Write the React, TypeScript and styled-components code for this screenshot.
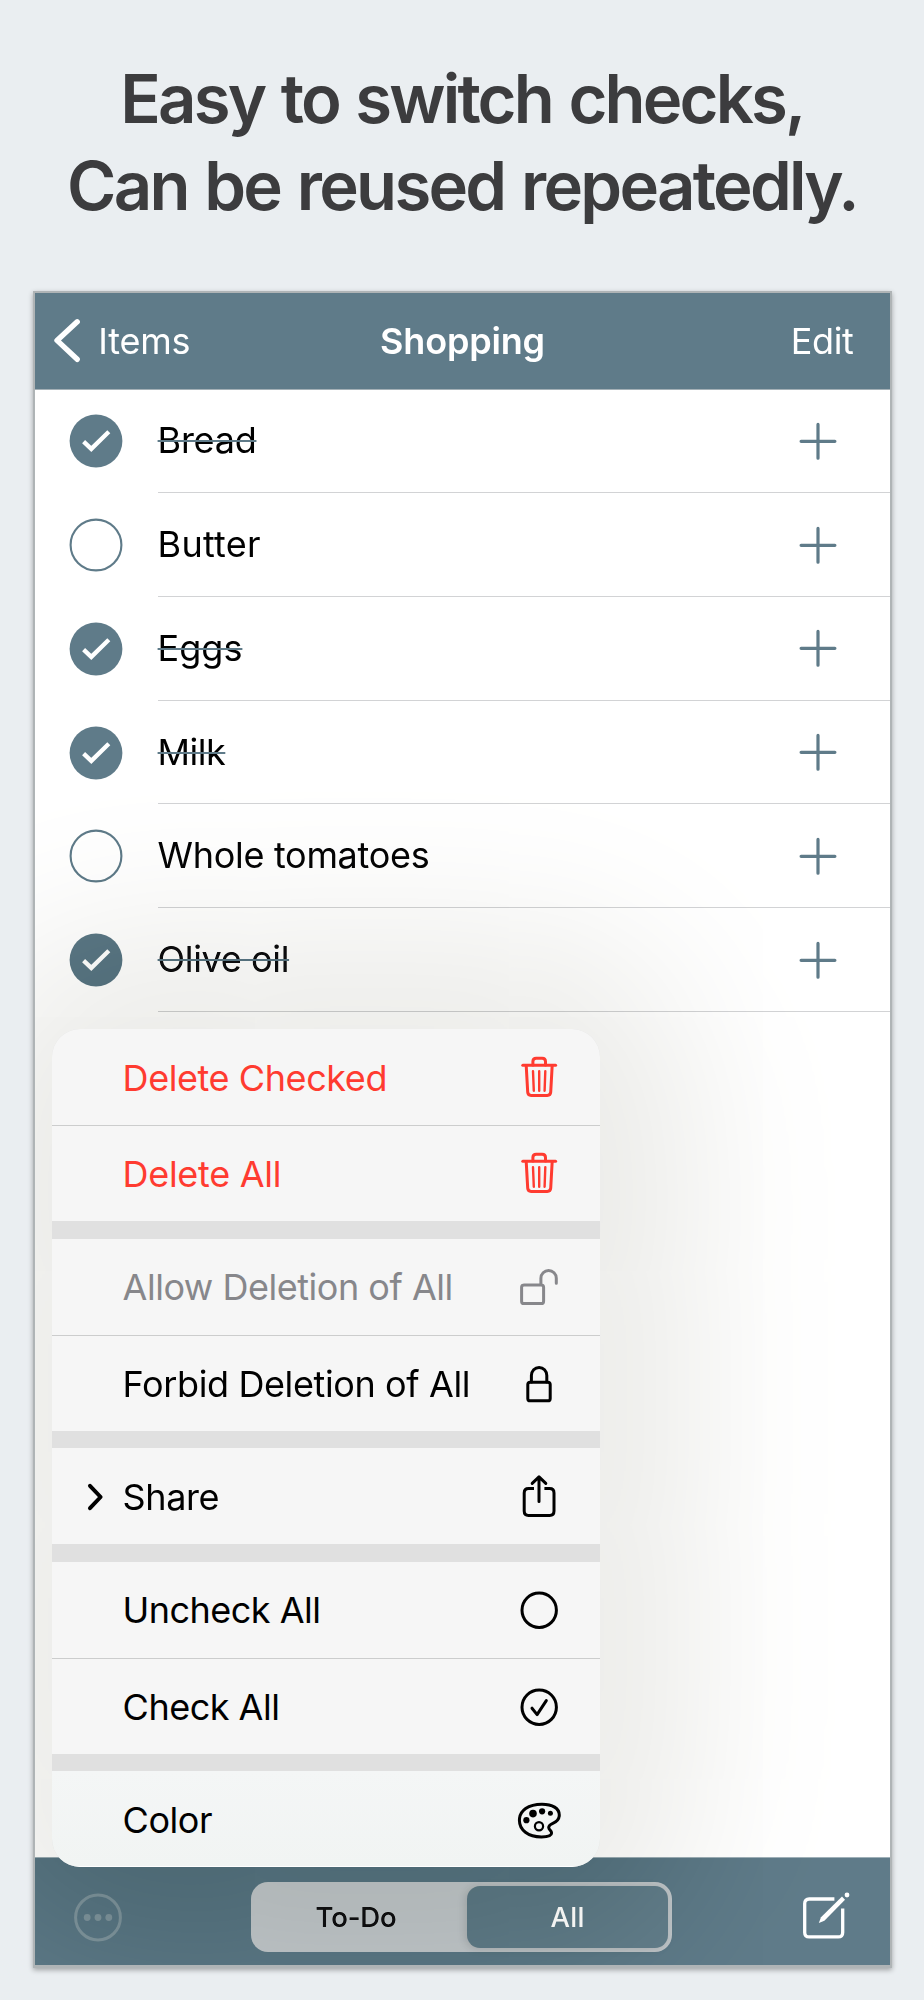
import React from 'react';
import styled, { createGlobalStyle, css } from 'styled-components';

const slate = '#5f7b89';

const GlobalStyle = createGlobalStyle`
  *, *::before, *::after { box-sizing: border-box; }
  body {
    margin: 0;
    background: #eaeef1;
    font-family: Inter, "Liberation Sans", sans-serif;
    color: #000;
  }
`;

const Page = styled.main`
  width: 924px;
  height: 2000px;
  overflow: hidden;
  padding-top: 56px;
  background: #eaeef1;
`;

const Headline = styled.h1`
  margin: 0 0 62px;
  height: 173px;
  text-align: center;
  font-size: 67px;
  font-weight: 600;
  line-height: 86.5px;
  color: #3c3c3e;
  white-space: nowrap;
`;

const HeadlineLine = styled.span<{ $tracking: number }>`
  display: block;
  letter-spacing: ${p => p.$tracking}px;
  word-spacing: 2.4px;
`;

const Phone = styled.section`
  position: relative;
  display: flex;
  flex-direction: column;
  width: 859px;
  height: 1677px;
  margin-left: 33px;
  border: 2px solid #afb4b6;
  border-bottom-width: 3px;
  background: #fff;
  box-shadow: 0 2px 5px rgba(0, 0, 0, 0.32);
`;

const NavBar = styled.header`
  display: grid;
  grid-template-columns: 1fr auto 1fr;
  align-items: center;
  height: 97px;
  padding: 0 18px;
  border-bottom: 1px solid #a4b0b6;
  background: ${slate};
  color: #fff;
  font-size: 36px;
  line-height: 44px;
`;

const BackButton = styled.div`
  display: flex;
  align-items: center;
  gap: 19.3px;
`;

const NavText = styled.span<{ $tracking: number }>`
  letter-spacing: ${p => p.$tracking}px;
`;

const NavTitle = styled(NavText)`
  font-weight: 600;
`;

const EditButton = styled(NavText)`
  justify-self: end;
  margin-right: 18.6px;
`;

const List = styled.ul`
  flex: 1;
  margin: -0.6px 0 0;
  padding: 0;
  list-style: none;
`;

const Row = styled.li`
  display: flex;
  align-items: center;
  height: 103.75px;
  padding-left: 34px;
`;

const RowBody = styled.div`
  flex: 1;
  display: flex;
  align-items: center;
  justify-content: space-between;
  height: 100%;
  margin-left: 34.6px;
  padding-right: 50px;
  border-bottom: 1px solid #d2d3d5;
`;

const RowLabel = styled.span<{ $tracking: number; $struck: boolean }>`
  margin-bottom: 1px;
  font-size: 36px;
  line-height: 44px;
  letter-spacing: ${p => p.$tracking}px;
  ${p => p.$struck && css`
    text-decoration: line-through 2px ${slate};
  `}
`;

const Toolbar = styled.footer`
  display: flex;
  align-items: center;
  height: 108px;
  padding: 13px 39px 0 36.5px;
  border-top: 1px solid #9fb0b8;
  background: ${slate};

  > svg:last-child {
    margin-left: auto;
  }
`;

const Segmented = styled.div`
  display: grid;
  grid-template-columns: 1fr 201.5px;
  width: 421px;
  height: 70px;
  margin: 0 0 2px 127.8px;
  padding: 4px;
  border-radius: 17px;
  background: #c1c7cb;
`;

const Segment = styled.span<{ $active?: boolean }>`
  display: flex;
  align-items: center;
  justify-content: center;
  border-radius: 13px;
  font-size: 27.5px;
  font-weight: 500;
  ${p => p.$active ? css`
    background: #647f8c;
    color: #fff;
    letter-spacing: 0.28px;
    box-shadow: -2px 1px 8px rgba(0, 0, 0, 0.12);
  ` : css`
    letter-spacing: -0.1px;
    padding-right: 10px;
  `}
`;

const MenuShade = styled.div`
  position: absolute;
  inset: 0;
  overflow: hidden;
  mix-blend-mode: difference;
  pointer-events: none;

  &::before {
    content: "";
    position: absolute;
    top: 736px;
    left: 17px;
    width: 548px;
    height: 838px;
    border-radius: 70px;
    box-shadow: 0 0 170px 94px rgb(21, 21, 24);
  }
`;

const Menu = styled.div`
  position: absolute;
  top: 736px;
  left: 17.4px;
  width: 547.6px;
  height: 838px;
  display: flex;
  flex-direction: column;
  gap: 17.6px;
  overflow: hidden;
  border-radius: 28px;
  background: #e0e0e0;
`;

const MenuGroup = styled.div`
  display: flex;
  flex-direction: column;
  background: #f6f6f6;

  &:last-child {
    background: linear-gradient(#f4f6f6, #f1f4f3);
    box-shadow: inset 0 -1px #fff;
  }
`;

const MenuItem = styled.div<{ $tone: string }>`
  display: flex;
  align-items: center;
  height: 96px;
  padding: 1px 37.1px 0 32px;
  color: ${p => p.$tone};

  & + & {
    border-top: 1px solid #cccdcd;
  }
`;

const MenuLead = styled.span`
  display: flex;
  width: 38.2px;
`;

const MenuLabel = styled.span<{ $tracking: number }>`
  flex: 1;
  font-size: 36px;
  line-height: 44px;
  white-space: nowrap;
  letter-spacing: ${p => p.$tracking}px;
`;

const Glyph = styled.svg`
  display: block;
  flex: none;
  overflow: visible;
  fill: none;
  stroke: currentColor;
  stroke-width: 3;
  stroke-linecap: round;
  stroke-linejoin: round;
`;

const RowGlyph = styled(Glyph)`
  color: ${slate};
`;

const BarGlyph = styled(Glyph)`
  color: #fff;
`;

const DimGlyph = styled(Glyph)`
  color: #8297a0;
`;

const CheckMark = ({ on }: { on: boolean }) => (
  <RowGlyph width="54" height="54" viewBox="0 0 54 54">
    {on ? (
      <>
        <circle cx="27" cy="27" r="26.4" fill={slate} stroke="none" />
        <path d="M14.6 27.6 22.3 34.9 39.8 17.8" stroke="#fff" strokeWidth="4.3" strokeLinecap="butt" strokeLinejoin="miter" />
      </>
    ) : (
      <circle cx="27" cy="27" r="25.4" strokeWidth="2.1" fill="#fff" />
    )}
  </RowGlyph>
);

const Plus = () => (
  <RowGlyph width="44" height="44" viewBox="0 0 44 44">
    <path d="M22 5.4V39.2M5.1 22.3H38.9" strokeWidth="3.2" />
  </RowGlyph>
);

const icons: Record<string, React.ReactNode> = {
  trash: (
    <>
      <path d="M7.8 11.2H40.6" />
      <path d="M17.9 11V7.6Q17.9 4.3 21.2 4.3H27.2Q30.5 4.3 30.5 7.6V11" />
      <path d="M11.2 11.4 12.7 38.2Q12.9 41.4 16.1 41.4H32.3Q35.5 41.4 35.7 38.2L37.2 11.4" />
      <path d="M18 17.3 18.8 36.8M24.2 17.3V36.8M30.3 17.3 29.6 36.8" strokeWidth="2.4" />
    </>
  ),
  unlocked: (
    <>
      <rect x="6.6" y="21.9" width="22" height="18.7" rx="2.4" />
      <path d="M25.9 21.5V15.2A7.7 7.7 0 0 1 41.3 15.2V20.2" />
    </>
  ),
  locked: (
    <>
      <rect x="12.8" y="22.2" width="22.4" height="18.6" rx="2.4" />
      <path d="M16.4 22V15.6A7.7 8.2 0 0 1 31.8 15.6V22" />
    </>
  ),
  share: (
    <>
      <path d="M19 15.6H13.6Q9.2 15.6 9.2 20V38Q9.2 42.4 13.6 42.4H34.6Q39 42.4 39 38V20Q39 15.6 34.6 15.6H29.4" strokeLinecap="butt" />
      <path d="M24 4.4V28.6M17.2 10.4 24 3.8 30.8 10.4" />
    </>
  ),
  circle: <circle cx="24.2" cy="24.2" r="17.2" />,
  check: (
    <>
      <circle cx="24.2" cy="24.2" r="17.2" />
      <path d="M17 25.2 22.1 31.6 31.3 17.6" />
    </>
  ),
  palette: (
    <>
      <path d="M27 8.2C37.5 8.2 44.3 12.4 44.3 19C44.3 23.3 41.6 25.8 37.8 27.4C35 28.6 33.7 29.6 33.7 31.5C33.7 34 36.6 34.3 36.6 37C36.6 39.9 32.5 40.9 26.5 40.9C13 40.9 4.4 34 4.4 24.3C4.4 14.5 13.5 8.2 27 8.2Z" />
      <g fill="currentColor" stroke="none">
        <circle cx="11.4" cy="24.2" r="3.1" />
        <circle cx="18" cy="17.6" r="3.8" />
        <circle cx="27.1" cy="15.3" r="3.1" />
        <circle cx="35.4" cy="17.2" r="2.5" />
      </g>
      <circle cx="24" cy="30.2" r="4.1" strokeWidth="2.2" />
    </>
  ),
};

const MenuIcon = ({ name }: { name: string }) => (
  <Glyph width="48" height="48" viewBox="0 0 48 48">{icons[name]}</Glyph>
);

interface Item { label: string; done: boolean; tracking: number }

const items: Item[] = [
  { label: 'Bread', done: true, tracking: -0.25 },
  { label: 'Butter', done: false, tracking: 0.25 },
  { label: 'Eggs', done: true, tracking: 0 },
  { label: 'Milk', done: true, tracking: -0.5 },
  { label: 'Whole tomatoes', done: false, tracking: -0.3 },
  { label: 'Olive oil', done: true, tracking: -0.35 },
];

interface Action { label: string; icon: string; tracking: number; tone?: string; submenu?: boolean }

const groups: Action[][] = [
  [
    { label: 'Delete Checked', icon: 'trash', tone: '#ff3b30', tracking: -0.42 },
    { label: 'Delete All', icon: 'trash', tone: '#ff3b30', tracking: -0.3 },
  ],
  [
    { label: 'Allow Deletion of All', icon: 'unlocked', tone: '#87878b', tracking: -0.48 },
    { label: 'Forbid Deletion of All', icon: 'locked', tracking: -0.38 },
  ],
  [{ label: 'Share', icon: 'share', submenu: true, tracking: -0.39 }],
  [
    { label: 'Uncheck All', icon: 'circle', tracking: -0.53 },
    { label: 'Check All', icon: 'check', tracking: -0.5 },
  ],
  [{ label: 'Color', icon: 'palette', tracking: -0.47 }],
];

export default function App() {
  return (
    <>
      <GlobalStyle />
      <Page>
        <Headline>
          <HeadlineLine $tracking={-2.83}>Easy to switch checks,</HeadlineLine>
          <HeadlineLine $tracking={-2.72}>Can be reused repeatedly.</HeadlineLine>
        </Headline>
        <Phone>
          <NavBar>
            <BackButton>
              <BarGlyph width="26" height="46" viewBox="0 0 26 46">
                <path d="M24.2 3.8 4 22.4 24.2 41.3" strokeWidth="5.4" />
              </BarGlyph>
              <NavText $tracking={-0.21}>Items</NavText>
            </BackButton>
            <NavTitle $tracking={-0.17}>Shopping</NavTitle>
            <EditButton $tracking={-0.37}>Edit</EditButton>
          </NavBar>
          <List>
            {items.map(item => (
              <Row key={item.label}>
                <CheckMark on={item.done} />
                <RowBody>
                  <RowLabel $tracking={item.tracking} $struck={item.done}>{item.label}</RowLabel>
                  <Plus />
                </RowBody>
              </Row>
            ))}
          </List>
          <Toolbar>
            <DimGlyph width="52" height="52" viewBox="0 0 52 52">
              <circle cx="26" cy="25.5" r="22.4" />
              <g fill="currentColor" stroke="none">
                <circle cx="15.2" cy="25.5" r="3.4" />
                <circle cx="26" cy="25.5" r="3.4" />
                <circle cx="36.8" cy="25.5" r="3.4" />
              </g>
            </DimGlyph>
            <Segmented>
              <Segment>To-Do</Segment>
              <Segment $active>All</Segment>
            </Segmented>
            <BarGlyph width="50" height="50" viewBox="0 0 50 50">
              <path d="M33.4 6H8.2Q3.7 6 3.7 10.5V39.4Q3.7 43.9 8.2 43.9H37.2Q41.7 43.9 41.7 39.4V15.6" strokeLinecap="butt" strokeWidth="3.3" />
              <path d="M17.8 30 20 24.2 41 3.6 44 6.8 23.4 27.8Z" fill="currentColor" stroke="none" />
              <circle cx="46" cy="2" r="2.4" fill="currentColor" stroke="none" />
            </BarGlyph>
          </Toolbar>
          <MenuShade />
          <Menu>
            {groups.map(group => (
              <MenuGroup key={group[0].label}>
                {group.map(action => (
                  <MenuItem key={action.label} $tone={action.tone ?? '#000'}>
                    <MenuLead>
                      {action.submenu && (
                        <Glyph width="24" height="30" viewBox="0 0 24 30">
                          <path d="M6 3.8 16.6 15 6 26.2" strokeWidth="4" />
                        </Glyph>
                      )}
                    </MenuLead>
                    <MenuLabel $tracking={action.tracking}>{action.label}</MenuLabel>
                    <MenuIcon name={action.icon} />
                  </MenuItem>
                ))}
              </MenuGroup>
            ))}
          </Menu>
        </Phone>
      </Page>
    </>
  );
}
